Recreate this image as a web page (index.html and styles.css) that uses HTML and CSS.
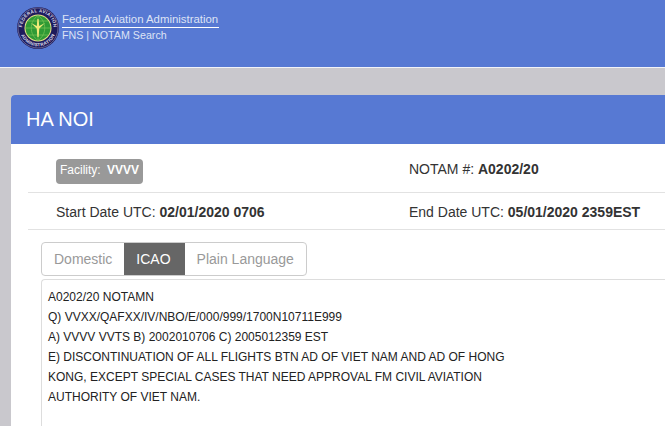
FILE: index.html
```html
<!DOCTYPE html>
<html lang="en">
<head>
<meta charset="utf-8">
<title>NOTAM Search</title>
<link rel="stylesheet" href="styles.css">
</head>
<body>
<header class="top">
  <svg class="seal" width="42" height="42" viewBox="0 0 42 42">
    <defs>
      <path id="arc-top" d="M5.200 21a15.800 15.800 0 0 1 31.600 0"/>
      <path id="arc-bottom" d="M2.700 21a18.300 18.300 0 0 0 36.600 0"/>
    </defs>
    <circle cx="21" cy="21" r="21" fill="#1e1b5c"/>
    <circle cx="21" cy="21" r="20" fill="none" stroke="#a8a6c4" stroke-width=".5"/>
    <text class="seal-text"><textPath href="#arc-top" startOffset="50%" text-anchor="middle">FEDERAL AVIATION</textPath></text>
    <text class="seal-text"><textPath href="#arc-bottom" startOffset="50%" text-anchor="middle">ADMINISTRATION</textPath></text>
    <circle cx="21" cy="21" r="13.500" fill="#e9e08a"/>
    <circle cx="21" cy="21" r="12.500" fill="#2f9a35"/>
    <path d="M21 8.500v25M8.500 21h25M11 14h20M11 28h20M21 8.500c-9 6-9 19 0 25M21 8.500c9 6 9 19 0 25" stroke="#79c458" stroke-width=".7" fill="none"/>
    <path d="M20.400 12h1.200l.6 7 5.800-3-5.700 5.500-.7 8.500h-1.200l-.7-8.500-5.700-5.500 5.800 3z" fill="#f1ea78"/>
  </svg>
  <div class="brand">
    <div class="agency">Federal Aviation Administration</div>
    <div class="service">FNS | NOTAM Search</div>
  </div>
</header>
<main class="band">
  <section class="card">
    <h1 class="card-title">HA NOI</h1>
    <div class="card-body">
      <div class="row row-first">
        <div class="cell cell-badge"><span class="badge">Facility: <b class="badge-value">VVVV</b></span></div>
        <div class="cell cell-right cell-notam">NOTAM #: <b>A0202/20</b></div>
      </div>
      <div class="row row-second">
        <div class="cell">Start Date UTC: <b>02/01/2020 0706</b></div>
        <div class="cell cell-right">End Date UTC: <b>05/01/2020 2359EST</b></div>
      </div>
      <div class="tabs">
        <span class="tab">Domestic</span><span class="tab tab-active">ICAO</span><span class="tab">Plain Language</span>
      </div>
      <div class="notam">A0202/20 NOTAMN
Q) VVXX/QAFXX/IV/NBO/E/000/999/1700N10711E999
A) VVVV VVTS B) 2002010706 C) 2005012359 EST
E) DISCONTINUATION OF ALL FLIGHTS BTN AD OF VIET NAM AND AD OF HONG
KONG, EXCEPT SPECIAL CASES THAT NEED APPROVAL FM CIVIL AVIATION
AUTHORITY OF VIET NAM.</div>
    </div>
  </section>
</main>
</body>
</html>
```
FILE: styles.css
```css
* { box-sizing: border-box; }
html, body { margin: 0; height: 100%; overflow: hidden; }
body { width: 665px; height: 426px; background: #c9c8cd; font-family: "Liberation Sans", Arial, sans-serif; color: #333; }
.top { height: 68px; background: #5779d3; border-bottom: 1px solid #f2f3f8; display: flex; align-items: flex-start; padding: 7px 0 0 17px; }
.seal { flex: none; }
.seal-text { font-family: "Liberation Sans", Arial, sans-serif; font-size: 4.6px; font-weight: 700; fill: #d9d8e8; letter-spacing: .25px; }
.brand { margin-left: 3px; padding-top: 5px; color: #dde3f5; font-size: 11.4px; }
.agency { line-height: 15px; border-bottom: 1px solid #fff; width: 157px; white-space: nowrap; }
.service { font-size: 10.7px; line-height: 15px; }
.band { padding: 27px 0 0 11px; }
.card { background: #fff; border-radius: 4px 0 0 0; height: 331px; overflow: hidden; }
.card-title { margin: 0; height: 49px; background: #5779d3; color: #fff; font-weight: 400; font-size: 20px; line-height: 48px; padding-left: 15px; }
.card-body { padding: 0 0 0 17px; }
.row { display: flex; height: 37px; align-items: center; border-bottom: 1px solid #e2e2e2; font-size: 14px; color: #333; }
.row-first { height: 49px; }
.row-second { padding-top: 1px; }
.cell { width: 352px; padding-left: 28px; flex: none; white-space: nowrap; }
.cell-badge { padding-top: 7px; }
.cell-right { padding-left: 29px; width: 300px; }
.cell-notam { padding-top: 2px; }
.badge { display: inline-block; height: 25px; line-height: 23px; background: #999; color: #fff; border-radius: 4px; padding: 0 4px 0 4px; font-size: 12px; }
.row .badge-value { margin-left: 3px; }
.tabs { display: inline-flex; margin: 12px 0 0 13px; height: 34px; border: 1px solid #ccc; border-radius: 4px; overflow: hidden; font-size: 14px; color: #999; }
.tab { padding: 0 12px; line-height: 32px; }
.tab-active { background: #666; color: #fff; padding: 0 14px 0 12px; }
.notam { margin: 3px 0 0 13px; height: 150px; border: 1px solid #ddd; border-right: 0; border-radius: 4px 0 0 0; padding: 7px 6px; font-size: 12px; line-height: 20px; color: #222; white-space: pre; }
```
